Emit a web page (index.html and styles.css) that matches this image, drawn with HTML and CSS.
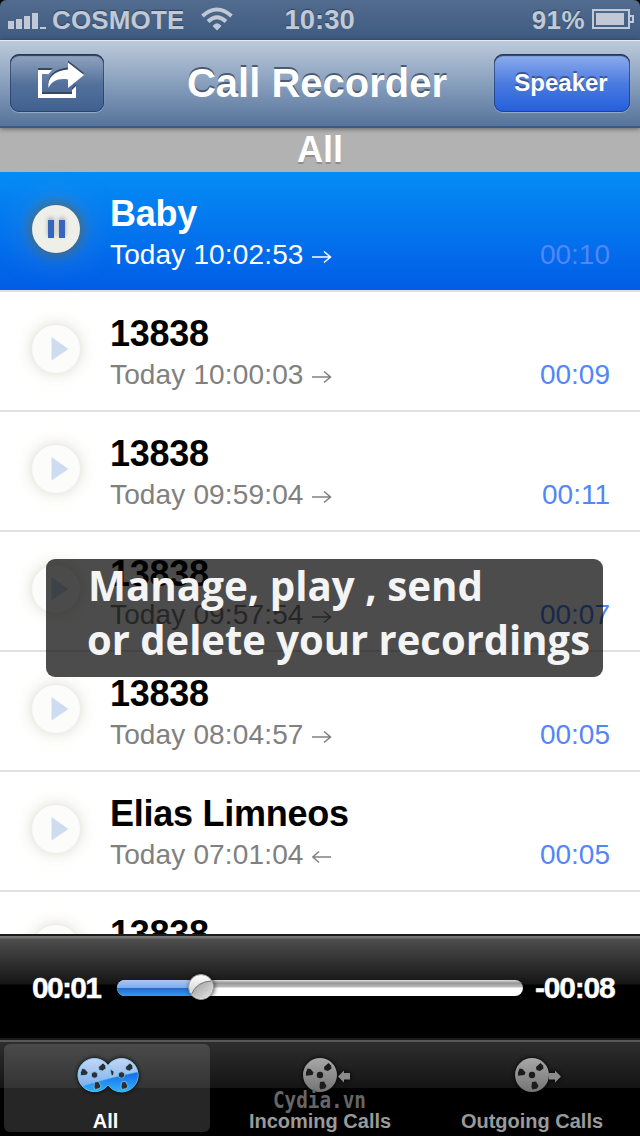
FILE: index.html
```html
<!DOCTYPE html>
<html lang="en">
<head>
    <meta charset="UTF-8">
    <meta name="viewport" content="width=device-width, initial-scale=1.0">
    <title>Call Recorder</title>
    <link rel="stylesheet" href="styles.css">
</head>
<body>
    <svg width="0" height="0" class="defs">
        <defs>
            <linearGradient id="gray" x1="0" y1="0" x2="0" y2="1">
                <stop offset="0" stop-color="#a8a8a8"/>
                <stop offset="1" stop-color="#757575"/>
            </linearGradient>
            <linearGradient id="blue-top" x1="0" y1="0" x2="0" y2="1">
                <stop offset="0" stop-color="#c3d6f5"/>
                <stop offset="1" stop-color="#72a9ee"/>
            </linearGradient>
            <linearGradient id="blue-low" x1="0" y1="0" x2="0" y2="1">
                <stop offset="0" stop-color="#1768e8"/>
                <stop offset="1" stop-color="#2fb4fa"/>
            </linearGradient>
            <g id="holes">
                <circle cx="0" cy="0" r="3.2"/>
                <path d="M-14 -2.5L-12.5 -6.5L-9.5 -6L-6.5 -2.5L-7.5 0L-14 .8Z"/>
                <path d="M4 -8L8.5 -12L11 -9.5L11.5 -6.5L8 -4L4.5 -5Z"/>
                <path d="M0 7L4 6.5L6.5 11L5 13.5L.5 14.5L-.5 12Z"/>
            </g>
            <symbol id="play" viewBox="0 0 48 48">
                <path d="M19.5 12L36.5 24L19.5 35.5Z" fill="#6f9ce2"/>
            </symbol>
        </defs>
    </svg>

    <div id="phone">
        <div id="status">
            <svg class="signal" width="38" height="20"><path d="M0 12h6v8H0zM8 10h6v10H8zM16 7h6v13h-6zM24 4h6v16h-6zM32 18h6v2h-6z"/></svg>
            <span class="carrier">COSMOTE</span>
            <svg class="wifi" width="32" height="24" viewBox="0 0 32 24">
                <path d="M1.5 9Q16 -4 30.5 9M7 14.500Q16 6 25 14.500" fill="none" stroke="#c0c9d5" stroke-width="4"/>
                <path d="M11.500 19Q16 13.500 20.500 19L16 23.500Z" fill="#c0c9d5"/>
            </svg>
            <span class="clock">10:30</span>
            <span class="percent">91%</span>
            <svg class="battery" width="42" height="20">
                <path d="M1 1h36v18H1zM38 7h3v6h-3" fill="none" stroke="#c0c9d5" stroke-width="2"/>
                <path d="M4 4h28v12H4z"/>
            </svg>
        </div>

        <div id="navbar">
            <div class="btn btn-share">
                <svg width="94" height="58" viewBox="10 54 94 58">
                    <g fill="#38475f" transform="translate(0 -2)">
                        <path d="M38 70H53L48.500 74H42V94H72V90L76 86V98H38Z"/>
                        <path d="M68 62.500L84 75L68 88V79.500C58 78 52 81 48.500 88C47 78 54 70.500 68 69.500Z"/>
                    </g>
                    <g fill="#fff">
                        <path d="M38 70H52L48.500 74H42V94H72V90L76 86V98H38Z"/>
                        <path d="M68 62.500L84 75L68 88V79.500C58 78 52 81 48.500 88C47 78 54 70.500 68 69.500Z"/>
                    </g>
                </svg>
            </div>
            <h1>Call Recorder</h1>
            <div class="btn btn-speaker">Speaker</div>
        </div>

        <div id="list">
            <div class="section">All</div>
            <div class="row active">
                <div class="ctrl"><svg width="48" height="48"><path d="M16 15h6v18h-6zM27 15h6v18h-6z" fill="#3565bd"/></svg></div>
                <div class="info">
                    <div class="name">Baby</div>
                    <div class="date">Today 10:02:53 <svg class="arrow" width="20" height="14"><path d="M0 7H18M12 1.500L18.500 7L12 12.500"/></svg></div>
                </div>
                <div class="time">00:10</div>
            </div>
            <div class="row">
                <div class="ctrl"><svg width="48" height="48"><use href="#play"/></svg></div>
                <div class="info">
                    <div class="name">13838</div>
                    <div class="date">Today 10:00:03 <svg class="arrow" width="20" height="14"><path d="M0 7H18M12 1.500L18.500 7L12 12.500"/></svg></div>
                </div>
                <div class="time">00:09</div>
            </div>
            <div class="row">
                <div class="ctrl"><svg width="48" height="48"><use href="#play"/></svg></div>
                <div class="info">
                    <div class="name">13838</div>
                    <div class="date">Today 09:59:04 <svg class="arrow" width="20" height="14"><path d="M0 7H18M12 1.500L18.500 7L12 12.500"/></svg></div>
                </div>
                <div class="time">00:11</div>
            </div>
            <div class="row">
                <div class="ctrl"><svg width="48" height="48"><use href="#play"/></svg></div>
                <div class="info">
                    <div class="name">13838</div>
                    <div class="date">Today 09:57:54 <svg class="arrow" width="20" height="14"><path d="M0 7H18M12 1.500L18.500 7L12 12.500"/></svg></div>
                </div>
                <div class="time">00:07</div>
            </div>
            <div class="row">
                <div class="ctrl"><svg width="48" height="48"><use href="#play"/></svg></div>
                <div class="info">
                    <div class="name">13838</div>
                    <div class="date">Today 08:04:57 <svg class="arrow" width="20" height="14"><path d="M0 7H18M12 1.500L18.500 7L12 12.500"/></svg></div>
                </div>
                <div class="time">00:05</div>
            </div>
            <div class="row">
                <div class="ctrl"><svg width="48" height="48"><use href="#play"/></svg></div>
                <div class="info">
                    <div class="name">Elias Limneos</div>
                    <div class="date">Today 07:01:04 <svg class="arrow" width="20" height="14"><path d="M1 7H19M7 1.500L.8 7L7 12.500"/></svg></div>
                </div>
                <div class="time">00:05</div>
            </div>
            <div class="row">
                <div class="ctrl"></div>
                <div class="info">
                    <div class="name">13838</div>
                </div>
            </div>
        </div>

        <div id="player">
            <span class="elapsed">00:01</span>
            <div class="slider">
                <div class="slider-fill"></div>
                <svg class="knob" width="28" height="28" viewBox="-14 -14 28 28">
                    <defs>
                        <linearGradient id="knob-bg" x1="0" y1="0" x2="0" y2="1">
                            <stop offset="0" stop-color="#fff"/>
                            <stop offset=".6" stop-color="#ddd"/>
                            <stop offset="1" stop-color="#f4f4f4"/>
                        </linearGradient>
                        <linearGradient id="knob-low" x1="0" y1="0" x2="1" y2="1">
                            <stop offset="0" stop-color="#999"/>
                            <stop offset="1" stop-color="#e6e6e6"/>
                        </linearGradient>
                    </defs>
                    <circle r="12.500" fill="url(#knob-bg)" stroke="#999" stroke-width="1"/>
                    <path d="M-9.500 7Q-4 -5.500 10.500 -6A12 12 0 0 1 -9.500 7Z" fill="url(#knob-low)"/>
                    <path d="M-9.500 7Q-4 -5.500 10.500 -6" fill="none" stroke="#777"/>
                </svg>
            </div>
            <span class="remain">-00:08</span>
        </div>

        <div id="tabbar">
            <div class="tab selected">
                <svg width="64" height="40" viewBox="-32 -20 64 40">
                    <g fill="url(#blue-top)" stroke="#8fd0fb">
                        <circle cx="13.500" cy="0" r="16.500"/>
                        <circle cx="-13.500" cy="0" r="16.500"/>
                    </g>
                    <path d="M-25.500 11Q4 2 29.700 -3A16.500 16.500 0 0 1 0 10A16.500 16.500 0 0 1 -25.500 11Z" fill="url(#blue-low)" stroke="#4cc4fc" stroke-width=".5"/>
                    <g fill="#2b2f33" stroke="#8ed6fc" stroke-width=".7">
                        <use href="#holes" x="-13.500"/>
                        <circle cx="13.500" cy="0" r="3.200"/>
                        <path d="M2 -6L6 -3.500L5.500 0L3.500 1Z"/>
                        <path d="M17.500 -8L22 -12L24.500 -9.500L25 -6.500L21.500 -4L18 -5Z"/>
                        <path d="M13.500 7L17.500 6.500L20 11L18.500 13.500L14 14.500L13 12Z"/>
                    </g>
                </svg>
                <span>All</span>
            </div>
            <div class="tab">
                <svg width="64" height="40" viewBox="-32 -20 64 40">
                    <circle cx="0" cy="0" r="17" fill="url(#gray)"/>
                    <use href="#holes" fill="#1c1c1c"/>
                    <path d="M18 1.500L24 -4.500V-2H30V4.500H24V7.500Z" fill="#8c8c8c"/>
                </svg>
                <span>Incoming Calls</span>
            </div>
            <div class="tab outgoing">
                <svg width="64" height="40" viewBox="-32 -20 64 40">
                    <circle cx="0" cy="0" r="17" fill="url(#gray)"/>
                    <use href="#holes" fill="#1c1c1c"/>
                    <path d="M17 -2H23V-4.500L29 1.500L23 7.500V4.500H17Z" fill="#8c8c8c"/>
                </svg>
                <span>Outgoing Calls</span>
            </div>
        </div>

        <svg id="watermark" width="100" height="30"><text x="3" y="20" textLength="93" lengthAdjust="spacingAndGlyphs">Cydia.vn</text></svg>
        <svg id="message" width="557" height="118">
            <text x="42" y="42" textLength="395" lengthAdjust="spacingAndGlyphs">Manage, play , send</text>
            <text x="41" y="96" textLength="503" lengthAdjust="spacingAndGlyphs">or delete your recordings</text>
        </svg>
    </div>
</body>
</html>
```
FILE: styles.css
```css
*{
    box-sizing: border-box;
}
body{
    margin: 0;
    background: #000;
    font-family: "Liberation Sans", Arial, sans-serif;
}
.defs{
    position: absolute;
}
svg{
    display: block;
    flex: none;
}
#phone{
    position: relative;
    width: 640px;
    height: 1136px;
    overflow: hidden;
    display: flex;
    flex-direction: column;
}

/* status bar */
#status{
    height: 40px;
    flex: none;
    display: flex;
    align-items: flex-start;
    padding: 0 6px 0 8px;
    border-radius: 6px 6px 0 0;
    background: linear-gradient(#526c8e, #3e5a80);
    color: #c0c9d5;
    fill: #c0c9d5;
    font-size: 26px;
    font-weight: bold;
    line-height: 40px;
    text-shadow: 0 -1px 1px #2e4260;
}
.signal{
    margin-top: 9px;
}
.carrier{
    margin-left: 6px;
    letter-spacing: .15px;
}
.wifi{
    margin: 7px 0 0 16px;
}
.clock{
    margin-left: 52px;
    font-size: 27.500px;
}
.percent{
    margin-left: auto;
    letter-spacing: .4px;
}
.battery{
    margin: 9px 0 0 7px;
}

/* navigation bar */
#navbar{
    position: relative;
    z-index: 1;
    height: 88px;
    flex: none;
    display: flex;
    align-items: flex-start;
    justify-content: space-between;
    padding: 12px 10px 0;
    border-top: 1px solid #e2e9f0;
    border-bottom: 2px solid #3d5a82;
    background: linear-gradient(#bdcadb, #889fbd 50%, #56739b);
    box-shadow: 0 1px 5px rgba(0,0,0,.45);
}
#navbar h1{
    margin: 0;
    padding-left: 41px;
    font-size: 40px;
    line-height: 60px;
    color: #fff;
    text-shadow: 0 -2px 0 #4a5b74;
}
.btn{
    height: 58px;
    margin-top: 1px;
    border-radius: 9px;
    box-shadow: inset 0 0 0 1px rgba(30,50,90,.6), inset 0 2px 1px rgba(20,30,50,.75), 0 1px 1px rgba(255,255,255,.35);
}
.btn-share{
    width: 94px;
    background: linear-gradient(#93a6c2, #54719b 52%, #3f6090);
}
.btn-speaker{
    width: 136px;
    margin-left: 5px;
    padding-right: 2px;
    background: linear-gradient(#8faeec, #4a7ae0 52%, #235fdc);
    color: #fff;
    font-size: 24px;
    font-weight: bold;
    line-height: 58px;
    text-align: center;
    text-shadow: 0 -2px 0 #3b5796;
}

/* recordings */
#list{
    height: 806px;
    flex: none;
    overflow: hidden;
    background: #fff;
}
.section{
    height: 44px;
    background: #b2b2b2;
    color: #fff;
    font-size: 36px;
    font-weight: bold;
    line-height: 44px;
    text-align: center;
    text-shadow: 0 2px 0 #8e8e8e;
}
.row{
    height: 120px;
    display: flex;
    padding: 0 30px 0 32px;
    border-bottom: 2px solid #e0e0e0;
}
.ctrl{
    width: 48px;
    height: 48px;
    flex: none;
    margin-top: 33px;
    border-radius: 50%;
    background: #fcfcfa;
    box-shadow: 0 0 14px rgba(110,105,75,.24), 0 0 28px rgba(220,215,180,.15);
}
.ctrl svg{
    opacity: .32;
}
.info{
    width: 300px;
    margin-left: 30px;
}
.name{
    margin-top: 21px;
    height: 42px;
    font-size: 36px;
    font-weight: bold;
    line-height: 42px;
    letter-spacing: -.25px;
}
.date{
    display: flex;
    align-items: center;
    height: 38px;
    gap: 8px;
    margin-top: 1px;
    font-size: 28px;
    line-height: 38px;
    letter-spacing: .15px;
    color: #808080;
}
.arrow{
    margin-top: 4px;
    fill: none;
    stroke: #808080;
    stroke-width: 1.500;
}
.time{
    margin: 64px 0 0 auto;
    font-size: 28px;
    line-height: 38px;
    color: #5386f6;
}
.active{
    background: linear-gradient(#058cf5, #015de6);
    color: #fff;
}
.active .ctrl{
    background: #efefea;
    box-shadow: 0 0 14px 1px rgba(100,90,50,.85), 0 0 34px 4px rgba(120,170,230,.4);
}
.active .ctrl svg{
    opacity: 1;
    filter: drop-shadow(0 -2px 2px rgba(0,0,0,.3));
}
.active .date{
    color: #fff;
}
.active .arrow{
    stroke: #fff;
}

/* player */
#player{
    height: 104px;
    flex: none;
    display: flex;
    align-items: center;
    padding: 2px 20px 0 32px;
    border-top: 2px solid #1b1b1b;
    background: linear-gradient(#747474 2px, #4d4d4d 3px, #151515 48px, #000 49px);
    color: #fff;
    font-size: 30px;
    font-weight: bold;
    letter-spacing: -1.700px;
    -webkit-text-stroke: .4px #fff;
}
.elapsed{
    width: 85px;
}
.slider{
    position: relative;
    width: 406px;
    height: 16px;
    flex: none;
    border-radius: 8px;
    background: linear-gradient(#ddd, #969696 3px, #bcbcbc 7px, #fff 8px);
}
.slider-fill{
    width: 84px;
    height: 16px;
    border-radius: 8px 0 0 8px;
    background: linear-gradient(#a9c6f2, #7faaf0 8px, #2368c8 8px, #339bf5);
}
.knob{
    position: absolute;
    left: 70px;
    top: -7px;
    filter: drop-shadow(1px 0 2px rgba(0,0,0,.6));
}
.remain{
    margin-left: 12px;
    letter-spacing: -1.200px;
}

/* tab bar */
#tabbar{
    height: 98px;
    flex: none;
    display: flex;
    gap: 8px;
    padding: 4px 4px 4px;
    border-top: 2px solid #1b1b1b;
    background: linear-gradient(#585858 2px, #2e2e2e 2px, #141414 48px, #000 48px);
}
.tab{
    flex: 1;
    display: flex;
    flex-direction: column;
    align-items: center;
    padding-top: 11px;
    border-radius: 6px;
    color: #9a9a9a;
    font-size: 20px;
    font-weight: bold;
}
.tab svg{
    filter: drop-shadow(0 0 2px #000);
}
.tab span{
    margin-top: 15px;
    line-height: 23px;
}
.selected{
    flex: 0 0 206px;
    background: linear-gradient(#4a4a4a, #343434 44px, #262626 44px);
    color: #fff;
}
.selected svg{
    margin-left: 2px;
}
.selected span{
    padding-right: 3px;
}
.outgoing{
    padding-right: 2px;
}

/* laid over the list and the tabs */
#watermark{
    position: absolute;
    left: 270px;
    top: 1088px;
    fill: #666;
    font: bold 23px "DejaVu Sans Mono", monospace;
}
#message{
    position: absolute;
    left: 46px;
    top: 559px;
    border-radius: 9px;
    background: rgba(0,0,0,.7);
    fill: #f4f4f4;
    font: bold 42px "Open Sans", sans-serif;
}
```
